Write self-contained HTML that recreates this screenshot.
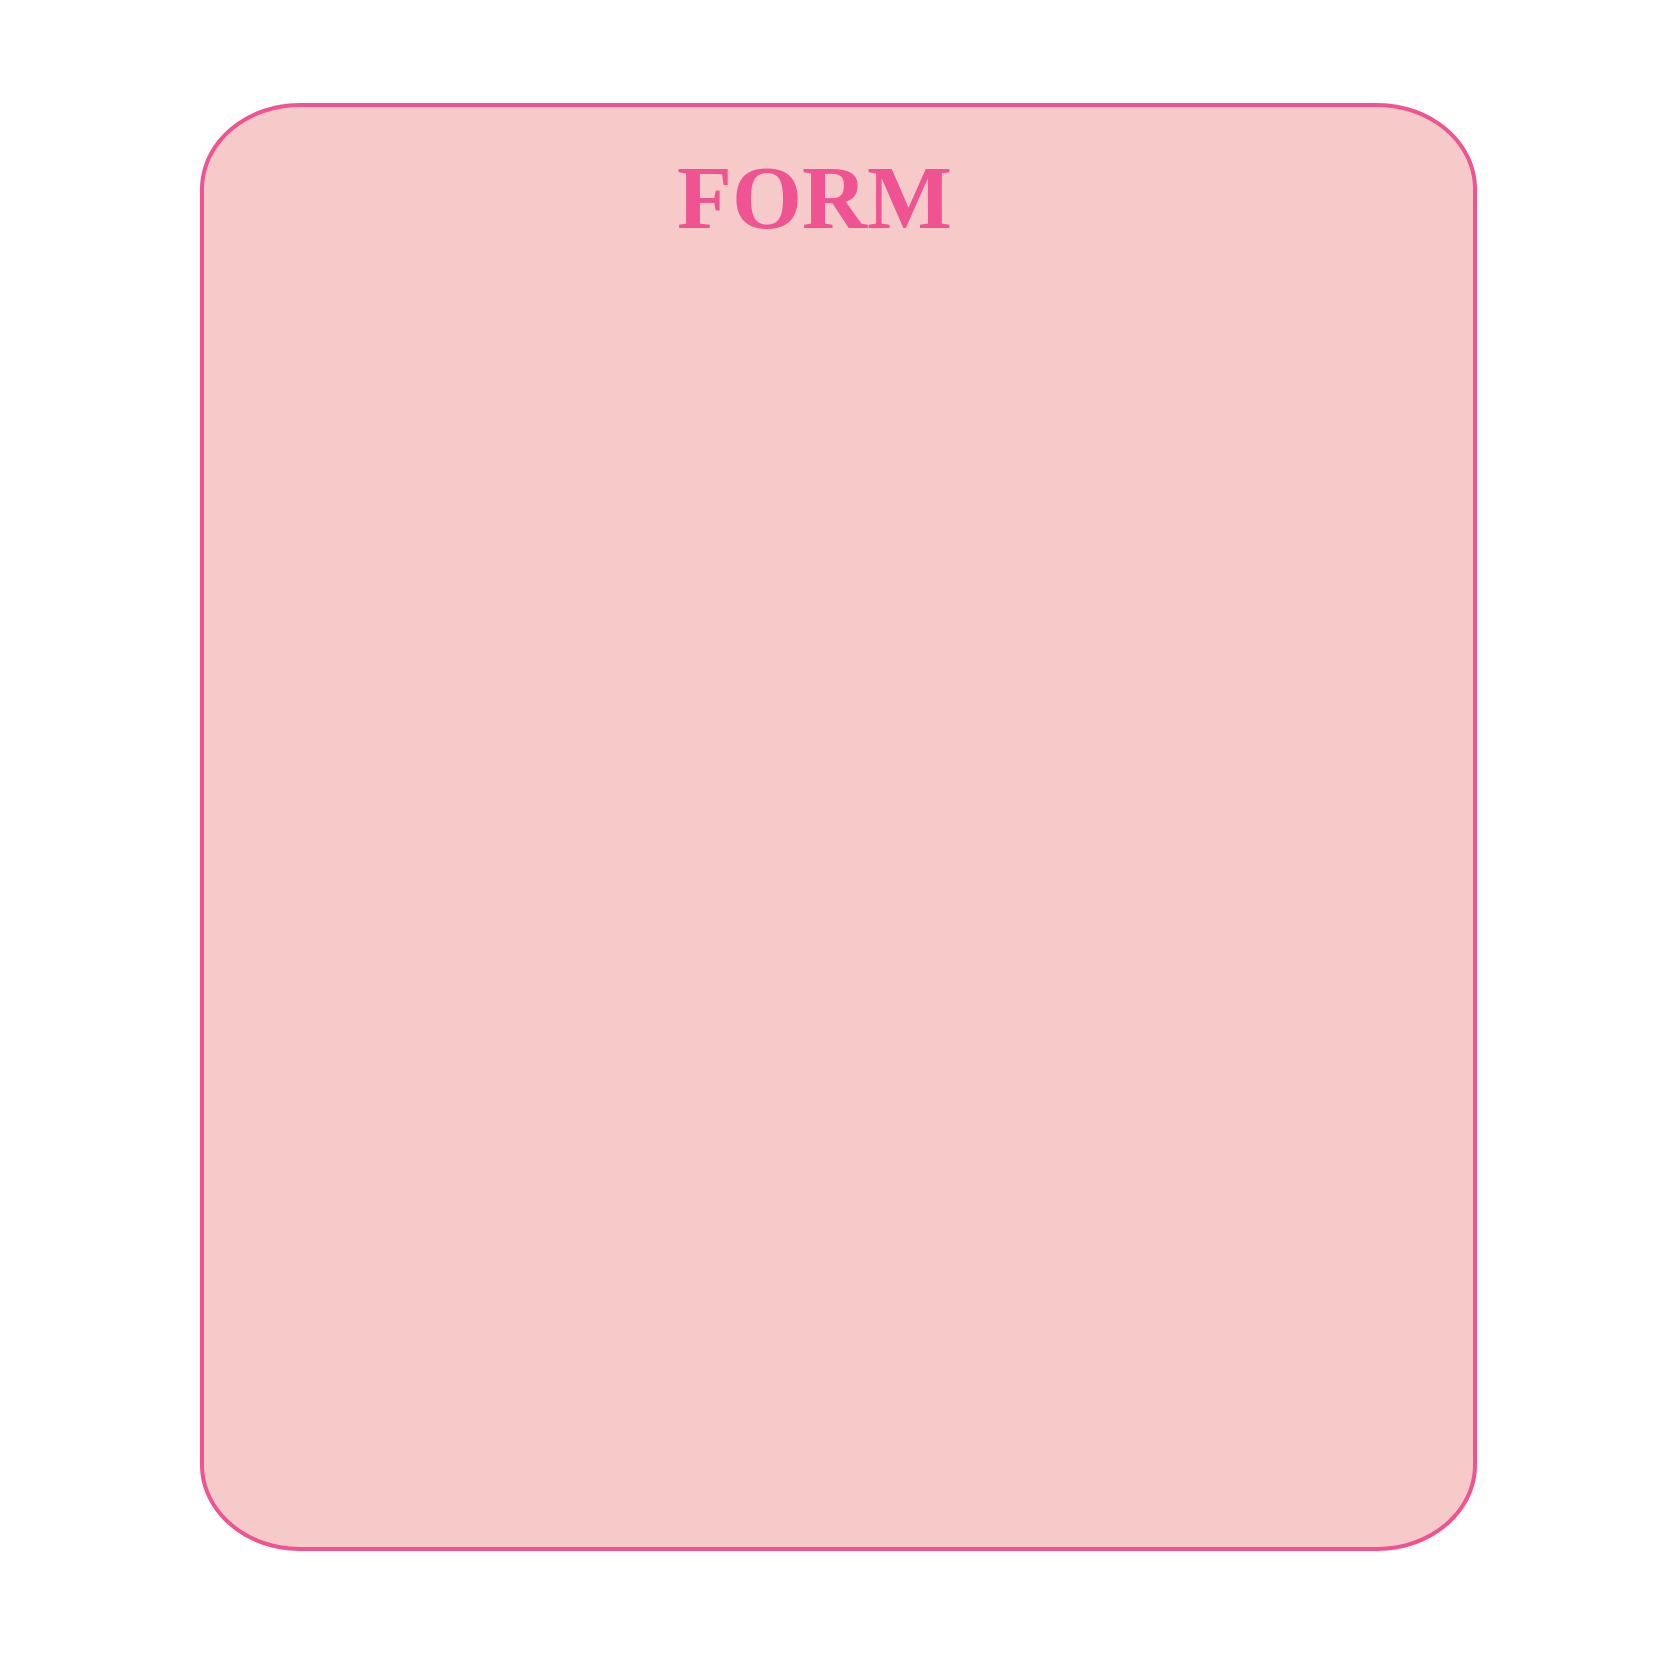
<!DOCTYPE html>
<html><head><style>
html,body{margin:0;padding:0;background:#fff;width:1667px;height:1667px;overflow:hidden}
.box{position:absolute;left:200px;top:103px;width:1269px;height:1440px;background:#f7caca;border:4px solid #ef5391;border-radius:100px/86px}
.t{position:absolute;left:677px;top:153px;white-space:nowrap;font-family:"Liberation Serif","Times New Roman",serif;font-weight:bold;font-size:90px;line-height:91px;color:#ef5391;letter-spacing:0}
</style></head><body>
<div class="box"></div>
<div class="t">FORM</div>
</body></html>
